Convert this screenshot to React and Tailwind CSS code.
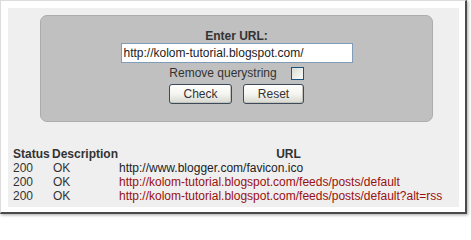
import React from "react";

const rows = [
  { status: "200", desc: "OK", url: "http://www.blogger.com/favicon.ico", red: false },
  { status: "200", desc: "OK", url: "http://kolom-tutorial.blogspot.com/feeds/posts/default", red: true },
  { status: "200", desc: "OK", url: "http://kolom-tutorial.blogspot.com/feeds/posts/default?alt=rss", red: true },
];

function XpButton({ children, width }) {
  return (
    <button
      className={`h-[20px] ${width} rounded-[3px] border border-[#3c4a5a] bg-gradient-to-b from-[#ffffff] via-[#f4f4f0] to-[#d8d8d2] text-[12px] leading-none text-[#333] shadow-[inset_-1px_-1px_0_#c4c4bc]`}
    >
      {children}
    </button>
  );
}

export default function App() {
  return (
    <div className="w-[471px] h-[218px] bg-white font-['Liberation_Sans',Arial,sans-serif]">
      <div className="w-[467px] h-[214px] bg-white border-t border-l border-[#dcdcdc] border-r-[2px] border-b-[2px] border-r-[#4a4a4a] border-b-[#4a4a4a] shadow-[1px_1px_3px_rgba(0,0,0,0.35)] pt-[7px] pl-[7px]">
        <div className="w-[451px] h-[199px] bg-[#efefef] pt-[7px]">
          <div className="ml-[32px] w-[393px] h-[107px] rounded-[7px] border border-[#acacac] bg-[#c0c0c0] flex flex-col items-center pt-[13px]">
            <div className="text-[12px] leading-[14px] font-bold text-[#333]">Enter URL:</div>
            <input
              readOnly
              value="http://kolom-tutorial.blogspot.com/"
              className="w-[232px] h-[20px] border border-[#7f9db9] bg-white px-[2px] text-[12px] text-[#222] outline-none"
            />
            <label className="mt-[3px] flex items-center gap-[14px] h-[14px] text-[12px] text-[#333]">
              <span>Remove querystring</span>
              <span className="w-[13px] h-[13px] border border-[#1c5180] bg-gradient-to-br from-[#dcdcd6] to-[#fbfbf8]" />
            </label>
            <div className="mt-[4px] flex gap-[11px]">
              <XpButton width="w-[63px]">Check</XpButton>
              <XpButton width="w-[61px]">Reset</XpButton>
            </div>
          </div>
          <table className="mt-[25px] ml-[5px] border-collapse text-[12px] leading-[14px] text-[#333]">
            <thead>
              <tr>
                <th className="w-[39px] p-0 text-left font-bold">Status</th>
                <th className="w-[66px] p-0 text-left font-bold">Description</th>
                <th className="w-[341px] p-0 text-center font-bold">URL</th>
              </tr>
            </thead>
            <tbody>
              {rows.map((r, i) => (
                <tr key={i}>
                  <td className="p-0">{r.status}</td>
                  <td className="p-0 pl-[1px]">{r.desc}</td>
                  <td className={`p-0 pl-[1px] whitespace-nowrap ${r.red ? "text-[#9a1010]" : "text-[#222]"}`}>{r.url}</td>
                </tr>
              ))}
            </tbody>
          </table>
        </div>
      </div>
    </div>
  );
}
